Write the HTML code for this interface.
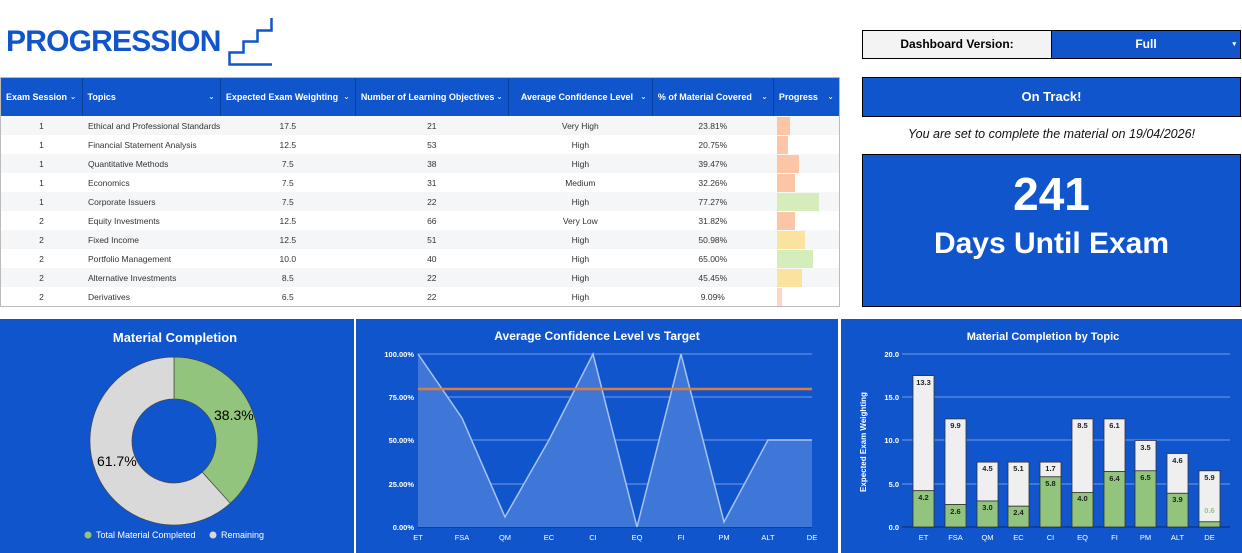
<!DOCTYPE html>
<html><head><meta charset="utf-8"><style>
*{margin:0;padding:0;box-sizing:border-box}
body{width:1242px;height:553px;background:#fff;position:relative;overflow:hidden;font-family:"Liberation Sans",sans-serif}
.abs{position:absolute}
table{border-collapse:collapse;font-size:8.5px;color:#333}
th{background:#1155cc;color:#fff;font-size:9px;font-weight:bold;height:38px;text-align:left;padding:0 5px;border-right:1px solid #0b3f9e;white-space:nowrap}
td{height:19px;text-align:center;white-space:nowrap}
tr:nth-child(even) td{background:#f5f6f8}
td.l{text-align:left;padding-left:6px}
.car{float:right;font-weight:normal;font-size:8px}
.pb{height:19px;position:relative}
.pb div{position:absolute;left:4px;top:1px;height:18px}
</style></head><body>
<div class="abs" style="left:6px;top:25px;font-size:30px;font-weight:bold;color:#1155cc;letter-spacing:-0.8px">PROGRESSION</div>
<svg class="abs" style="left:0;top:0" width="300" height="80"><path d="M272 64.5 H229.5 V52.5 H243.5 V41.5 H257.5 V30.5 H271.5 V18" fill="none" stroke="#1155cc" stroke-width="2.5"/></svg>

<div class="abs" style="left:0;top:77px;width:840px;height:230px;border:1px solid #bbb;overflow:hidden">
<table style="width:839px">
<tr><th style="width:81px">Exam Session <span class="car">⌄</span></th><th style="width:138px">Topics<span class="car">⌄</span></th><th style="width:135px">Expected Exam Weighting <span class="car">⌄</span></th><th style="width:153px">Number of Learning Objectives <span class="car">⌄</span></th><th style="width:144px;text-align:center">Average Confidence Level <span class="car">⌄</span></th><th style="width:121px">% of Material Covered <span class="car">⌄</span></th><th>Progress <span class="car">⌄</span></th></tr>
<tr><td>1</td><td class="l">Ethical and Professional Standards</td><td>17.5</td><td>21</td><td>Very High</td><td>23.81%</td><td class="pb"><div style="width:13px;background:#fcc6a6"></div></td></tr>
<tr><td>1</td><td class="l">Financial Statement Analysis</td><td>12.5</td><td>53</td><td>High</td><td>20.75%</td><td class="pb"><div style="width:11px;background:#fcc6a6"></div></td></tr>
<tr><td>1</td><td class="l">Quantitative Methods</td><td>7.5</td><td>38</td><td>High</td><td>39.47%</td><td class="pb"><div style="width:22px;background:#fcc6a6"></div></td></tr>
<tr><td>1</td><td class="l">Economics</td><td>7.5</td><td>31</td><td>Medium</td><td>32.26%</td><td class="pb"><div style="width:18px;background:#fcc6a6"></div></td></tr>
<tr><td>1</td><td class="l">Corporate Issuers</td><td>7.5</td><td>22</td><td>High</td><td>77.27%</td><td class="pb"><div style="width:42px;background:#d5edba"></div></td></tr>
<tr><td>2</td><td class="l">Equity Investments</td><td>12.5</td><td>66</td><td>Very Low</td><td>31.82%</td><td class="pb"><div style="width:18px;background:#fcc6a6"></div></td></tr>
<tr><td>2</td><td class="l">Fixed Income</td><td>12.5</td><td>51</td><td>High</td><td>50.98%</td><td class="pb"><div style="width:28px;background:#fbe29e"></div></td></tr>
<tr><td>2</td><td class="l">Portfolio Management</td><td>10.0</td><td>40</td><td>High</td><td>65.00%</td><td class="pb"><div style="width:36px;background:#d5edba"></div></td></tr>
<tr><td>2</td><td class="l">Alternative Investments</td><td>8.5</td><td>22</td><td>High</td><td>45.45%</td><td class="pb"><div style="width:25px;background:#fbe29e"></div></td></tr>
<tr><td>2</td><td class="l">Derivatives</td><td>6.5</td><td>22</td><td>High</td><td>9.09%</td><td class="pb"><div style="width:5px;background:#fcd5c8"></div></td></tr>
</table></div>

<div class="abs" style="left:862px;top:30px;width:379px;height:29px;border:1px solid #000;display:flex;font-size:12px;font-weight:bold">
<div style="width:189px;background:#f3f3f3;text-align:center;line-height:27px;border-right:1px solid #000">Dashboard Version:</div>
<div style="flex:1;background:#1155cc;color:#fff;text-align:center;line-height:27px;position:relative">Full<span style="position:absolute;right:4px;font-size:7px">▾</span></div></div>
<div class="abs" style="left:862px;top:77px;width:379px;height:40px;border:1px solid #000;background:#1155cc;color:#fff;font-weight:bold;font-size:13px;text-align:center;line-height:38px">On Track!</div>
<div class="abs" style="left:862px;top:127px;width:379px;text-align:center;font-style:italic;font-size:12.5px;color:#111">You are set to complete the material on 19/04/2026!</div>
<div class="abs" style="left:862px;top:154px;width:379px;height:153px;border:1px solid #000;background:#1155cc;color:#fff;font-weight:bold;text-align:center">
<div style="font-size:46px;margin-top:14px;line-height:50px">241</div>
<div style="font-size:30px;margin-top:8px">Days Until Exam</div></div>

<svg class="abs" style="left:0;top:0" width="1242" height="553">
<rect x="0" y="319" width="354" height="234" fill="#1155cc"/>
<rect x="356" y="319" width="482" height="234" fill="#1155cc"/>
<rect x="841" y="319" width="401" height="234" fill="#1155cc"/>
<g font-family="Liberation Sans,sans-serif" font-weight="bold" fill="#fff" text-anchor="middle">
<text x="175" y="342" font-size="13">Material Completion</text>
<text x="597" y="340" font-size="12">Average Confidence Level vs Target</text>
<text x="1043" y="340" font-size="11">Material Completion by Topic</text></g>
<path d="M174 357 A84 84 0 0 1 230.3 503.3 L202.2 472.1 A42 42 0 0 0 174 399 Z" fill="#93c47d" stroke="#444" stroke-width="0.7"/>
<path d="M230.3 503.3 A84 84 0 1 1 174 357 L174 399 A42 42 0 1 0 202.2 472.1 Z" fill="#d9d9d9" stroke="#444" stroke-width="0.7"/>
<g font-family="Liberation Sans,sans-serif" font-size="14" fill="#000"><text x="214" y="420">38.3%</text><text x="97" y="466">61.7%</text></g>
<circle cx="88" cy="535" r="3.5" fill="#93c47d"/><circle cx="213" cy="535" r="3.5" fill="#d9d9d9"/>
<g font-family="Liberation Sans,sans-serif" font-size="9" fill="#fff"><text x="96" y="538">Total Material Completed</text><text x="221" y="538">Remaining</text></g>

<g stroke="#5f8ee0" stroke-width="1.2"><line x1="418" y1="354" x2="812" y2="354"/><line x1="418" y1="397" x2="812" y2="397"/><line x1="418" y1="440" x2="812" y2="440"/><line x1="418" y1="484" x2="812" y2="484"/></g>
<line x1="418" y1="527" x2="812" y2="527" stroke="#0a3a8c" stroke-width="1.5"/>
<path d="M418 354 L462 418 L505 517 L549 440 L593 354 L637 527 L681 354 L724 522 L768 440 L812 440 L812 527 L418 527 Z" fill="#3f77d8" stroke="none"/>
<path d="M418 354 L462 418 L505 517 L549 440 L593 354 L637 527 L681 354 L724 522 L768 440 L812 440" fill="none" stroke="#a8c2ef" stroke-width="1.5"/>
<line x1="418" y1="389" x2="812" y2="389" stroke="#e07b39" stroke-width="2.5"/>
<g font-family="Liberation Sans,sans-serif" font-size="7.5" font-weight="bold" fill="#fff" text-anchor="end"><text x="414" y="357">100.00%</text><text x="414" y="400">75.00%</text><text x="414" y="443">50.00%</text><text x="414" y="487">25.00%</text><text x="414" y="530">0.00%</text></g>
<g font-family="Liberation Sans,sans-serif" font-size="7.5" fill="#fff" text-anchor="middle"><text x="418" y="540">ET</text><text x="462" y="540">FSA</text><text x="505" y="540">QM</text><text x="549" y="540">EC</text><text x="593" y="540">CI</text><text x="637" y="540">EQ</text><text x="681" y="540">FI</text><text x="724" y="540">PM</text><text x="768" y="540">ALT</text><text x="812" y="540">DE</text></g>

<g stroke="#5f8ee0" stroke-width="1.2"><line x1="902" y1="354" x2="1230" y2="354"/><line x1="902" y1="397" x2="1230" y2="397"/><line x1="902" y1="440" x2="1230" y2="440"/><line x1="902" y1="484" x2="1230" y2="484"/></g>
<line x1="902" y1="527" x2="1230" y2="527" stroke="#0a3a8c" stroke-width="1.5"/>
<g font-family="Liberation Sans,sans-serif" font-size="7.5" font-weight="bold" fill="#fff" text-anchor="end"><text x="899" y="357">20.0</text><text x="899" y="400">15.0</text><text x="899" y="443">10.0</text><text x="899" y="487">5.0</text><text x="899" y="530">0.0</text></g>
<text transform="translate(866 442) rotate(-90)" font-family="Liberation Sans,sans-serif" font-size="8" font-weight="bold" fill="#fff" text-anchor="middle">Expected Exam Weighting</text>
<g stroke="#333" stroke-width="0.8">
<rect x="913" y="375.6" width="21" height="115.1" fill="#efefef"/><rect x="913" y="490.7" width="21" height="36.3" fill="#93c47d"/>
<rect x="945" y="418.9" width="21" height="85.6" fill="#efefef"/><rect x="945" y="504.5" width="21" height="22.5" fill="#93c47d"/>
<rect x="977" y="462.1" width="21" height="38.9" fill="#efefef"/><rect x="977" y="501" width="21" height="26" fill="#93c47d"/>
<rect x="1008" y="462.1" width="21" height="44.1" fill="#efefef"/><rect x="1008" y="506.2" width="21" height="20.8" fill="#93c47d"/>
<rect x="1040" y="462.1" width="21" height="14.7" fill="#efefef"/><rect x="1040" y="476.8" width="21" height="50.2" fill="#93c47d"/>
<rect x="1072" y="418.9" width="21" height="73.5" fill="#efefef"/><rect x="1072" y="492.4" width="21" height="34.6" fill="#93c47d"/>
<rect x="1104" y="418.9" width="21" height="52.7" fill="#efefef"/><rect x="1104" y="471.6" width="21" height="55.4" fill="#93c47d"/>
<rect x="1135" y="440.5" width="21" height="30.3" fill="#efefef"/><rect x="1135" y="470.8" width="21" height="56.2" fill="#93c47d"/>
<rect x="1167" y="453.5" width="21" height="39.8" fill="#efefef"/><rect x="1167" y="493.3" width="21" height="33.7" fill="#93c47d"/>
<rect x="1199" y="470.8" width="21" height="51" fill="#efefef"/><rect x="1199" y="521.8" width="21" height="5.2" fill="#93c47d"/>
</g>
<g font-family="Liberation Sans,sans-serif" font-size="7.5" font-weight="bold" fill="#222" text-anchor="middle">
<text x="923.5" y="385">13.3</text><text x="955.5" y="428">9.9</text><text x="987.5" y="471">4.5</text><text x="1018.5" y="471">5.1</text><text x="1050.5" y="471">1.7</text><text x="1082.5" y="428">8.5</text><text x="1114.5" y="428">6.1</text><text x="1145.5" y="450">3.5</text><text x="1177.5" y="463">4.6</text><text x="1209.5" y="480">5.9</text>
<text x="923.5" y="500">4.2</text><text x="955.5" y="514">2.6</text><text x="987.5" y="510">3.0</text><text x="1018.5" y="515">2.4</text><text x="1050.5" y="486">5.8</text><text x="1082.5" y="501">4.0</text><text x="1114.5" y="481">6.4</text><text x="1145.5" y="480">6.5</text><text x="1177.5" y="502">3.9</text><text x="1209.5" y="513" fill="#93c47d">0.6</text></g>
<g font-family="Liberation Sans,sans-serif" font-size="7.5" fill="#fff" text-anchor="middle"><text x="923.5" y="540">ET</text><text x="955.5" y="540">FSA</text><text x="987.5" y="540">QM</text><text x="1018.5" y="540">EC</text><text x="1050.5" y="540">CI</text><text x="1082.5" y="540">EQ</text><text x="1114.5" y="540">FI</text><text x="1145.5" y="540">PM</text><text x="1177.5" y="540">ALT</text><text x="1209.5" y="540">DE</text></g>
</svg>
</body></html>
